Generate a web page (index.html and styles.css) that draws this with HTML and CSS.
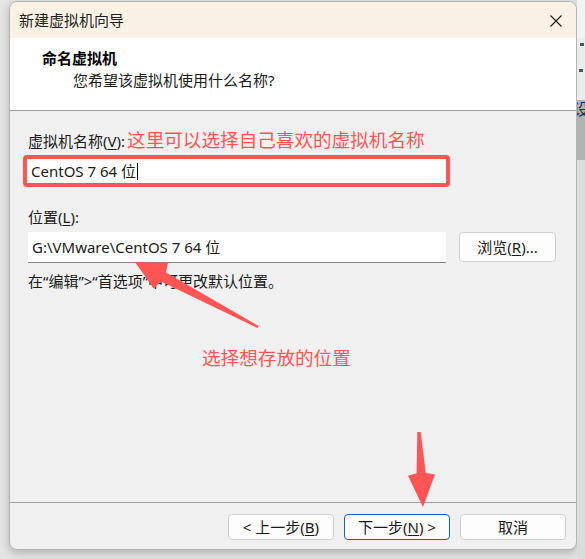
FILE: index.html
```html
<!DOCTYPE html>
<html lang="zh-CN">
<head>
<meta charset="utf-8">
<title>新建虚拟机向导</title>
<link rel="stylesheet" href="styles.css">
</head>
<body>
<div class="desk">
  <div class="window">
    <div class="titlebar">
      <span class="title">新建虚拟机向导</span>
      <span class="close">
        <svg width="12" height="12" viewBox="0 0 12 12"><path d="M0.5 0.5 L11.5 11.5 M11.5 0.5 L0.5 11.5" stroke="#1b1b1b" stroke-width="1.1" fill="none"/></svg>
      </span>
    </div>
    <div class="header">
      <div class="h-title">命名虚拟机</div>
      <div class="h-sub">您希望该虚拟机使用什么名称?</div>
    </div>
    <div class="content">
      <div class="label">虚拟机名称(<u>V</u>):<span class="note">这里可以选择自己喜欢的虚拟机名称</span></div>
      <div class="highlight"><div class="field">CentOS 7 64 位<span class="caret"></span></div></div>
      <div class="label loc">位置(<u>L</u>):</div>
      <div class="row">
        <div class="field path">G:\VMware\CentOS 7 64 位</div>
        <div class="btn browse">浏览(<u>R</u>)...</div>
      </div>
      <div class="hint">在“编辑”&gt;“首选项”中可更改默认位置。</div>
      <div class="note note2">选择想存放的位置</div>
    </div>
    <div class="footer">
      <div class="btn">&lt; 上一步(<u>B</u>)</div>
      <div class="btn primary">下一步(<u>N</u>) &gt;</div>
      <div class="btn">取消</div>
    </div>
  </div>
  <div class="side">
    <div class="s1"></div>
    <div class="s2"><span class="mark m1"></span><span class="mark m2"></span></div>
    <div class="s3"><span class="glyph">设</span></div>
    <div class="s4"></div>
  </div>
  <svg class="arrows" width="585" height="559" viewBox="0 0 585 559">
    <polygon fill="#ff5555" points="135,262 168,262.8 166,272.4 258.6,326 257.4,328 161,281.6 153.6,288.6"/>
    <polygon fill="#ff5555" points="423,507 435,474.4 425.8,472.9 420.7,431.9 417.3,432.1 416.6,473.3 408,475.8"/>
  </svg>
</div>
</body>
</html>
```
FILE: styles.css
```css
html, body {
  margin: 0;
  padding: 0;
}
body {
  width: 585px;
  height: 559px;
  overflow: hidden;
  background: #e4e4e4;
  font-family: "Noto Sans", "Noto Sans CJK SC", sans-serif;
  font-size: 15px;
  color: #1a1a1a;
}
.desk {
  position: relative;
  display: flex;
  width: 585px;
  height: 559px;
}
.window {
  margin: 1px 0 0 9px;
  width: 566px;
  height: 547px;
  border: 1px solid #b4b4b4;
  border-radius: 8px;
  overflow: hidden;
  background: #f0f0f0;
  box-shadow: 0 3px 8px rgba(0, 0, 0, 0.22);
  display: flex;
  flex-direction: column;
  flex: none;
}
.titlebar {
  height: 36px;
  background: #f8f1e4;
  display: flex;
  align-items: center;
  justify-content: space-between;
  padding: 0 14px 0 9px;
  flex: none;
}
.title {
  font-size: 15px;
  line-height: 20px;
  color: #1f1f1f;
}
.close {
  display: flex;
  width: 12px;
  height: 12px;
  margin-top: 1px;
}
.header {
  background: #ffffff;
  border-bottom: 1px solid #a0a0a0;
  padding: 9px 0 0 32px;
  box-sizing: border-box;
  flex: none;
  height: 73px;
}
.h-title {
  font-weight: bold;
  font-size: 15px;
  line-height: 22px;
  color: #000;
}
.h-sub {
  margin-left: 31px;
  line-height: 22px;
  color: #1a1a1a;
}
.content {
  flex: 1;
  padding: 18px 0 0 18px;
}
.label {
  line-height: 22px;
  height: 22px;
  white-space: nowrap;
}
u {
  text-decoration: underline;
  text-underline-offset: 2px;
}
.note {
  color: #ff5555;
  font-size: 18.6px;
  margin-left: 2px;
}
.highlight {
  margin: 4px 0 0 -5px;
  width: 419px;
  height: 24px;
  border: 4px solid #ff5555;
  border-radius: 4px;
  background: #ffffff;
}
.field {
  background: #ffffff;
  line-height: 24px;
  padding-left: 4px;
  display: flex;
  align-items: center;
  white-space: nowrap;
}
.caret {
  display: inline-block;
  width: 1px;
  height: 17px;
  background: #000;
  margin-left: 1px;
}
.loc {
  margin-top: 19px;
}
.row {
  margin-top: 4px;
  display: flex;
  align-items: flex-start;
}
.path {
  width: 414px;
  height: 30px;
  line-height: 30px;
  border-bottom: 1px solid #868686;
  padding-left: 4px;
}
.btn {
  box-sizing: border-box;
  height: 26px;
  width: 106px;
  border: 1px solid #d0d0d0;
  border-radius: 4px;
  background: #fdfdfd;
  display: flex;
  align-items: center;
  justify-content: center;
  line-height: 20px;
  white-space: nowrap;
}
.browse {
  margin-left: 13px;
  width: 97px;
  height: 30px;
}
.hint {
  margin-top: 7px;
  line-height: 22px;
}
.note2 {
  margin: 53px 0 0 174px;
  line-height: 26px;
}
.footer {
  flex: none;
  height: 47px;
  box-sizing: border-box;
  border-top: 1px solid #a0a0a0;
  padding: 11px 10px 0 0;
  display: flex;
  justify-content: flex-end;
  gap: 10px;
}
.primary {
  border-color: #0a64c0;
}
.side {
  flex: 1;
  display: flex;
  flex-direction: column;
}
.s1 {
  height: 38px;
  background: #f3f3f3;
}
.s2 {
  height: 62px;
  background: #ececec;
  position: relative;
}
.mark {
  position: absolute;
  left: 3px;
  width: 4px;
  height: 3px;
  background: #4a5560;
}
.m1 { top: 5px; }
.m2 { top: 31px; left: 2px; }
.s3 {
  height: 60px;
  background: #b3b3b3;
  overflow: hidden;
}
.glyph {
  display: block;
  margin-left: -4px;
  font-size: 16px;
  line-height: 18px;
  color: #1b2b55;
}
.s4 {
  flex: 1;
  background: #dcdcdc;
}
.arrows {
  position: absolute;
  left: 0;
  top: 0;
  pointer-events: none;
}
```
